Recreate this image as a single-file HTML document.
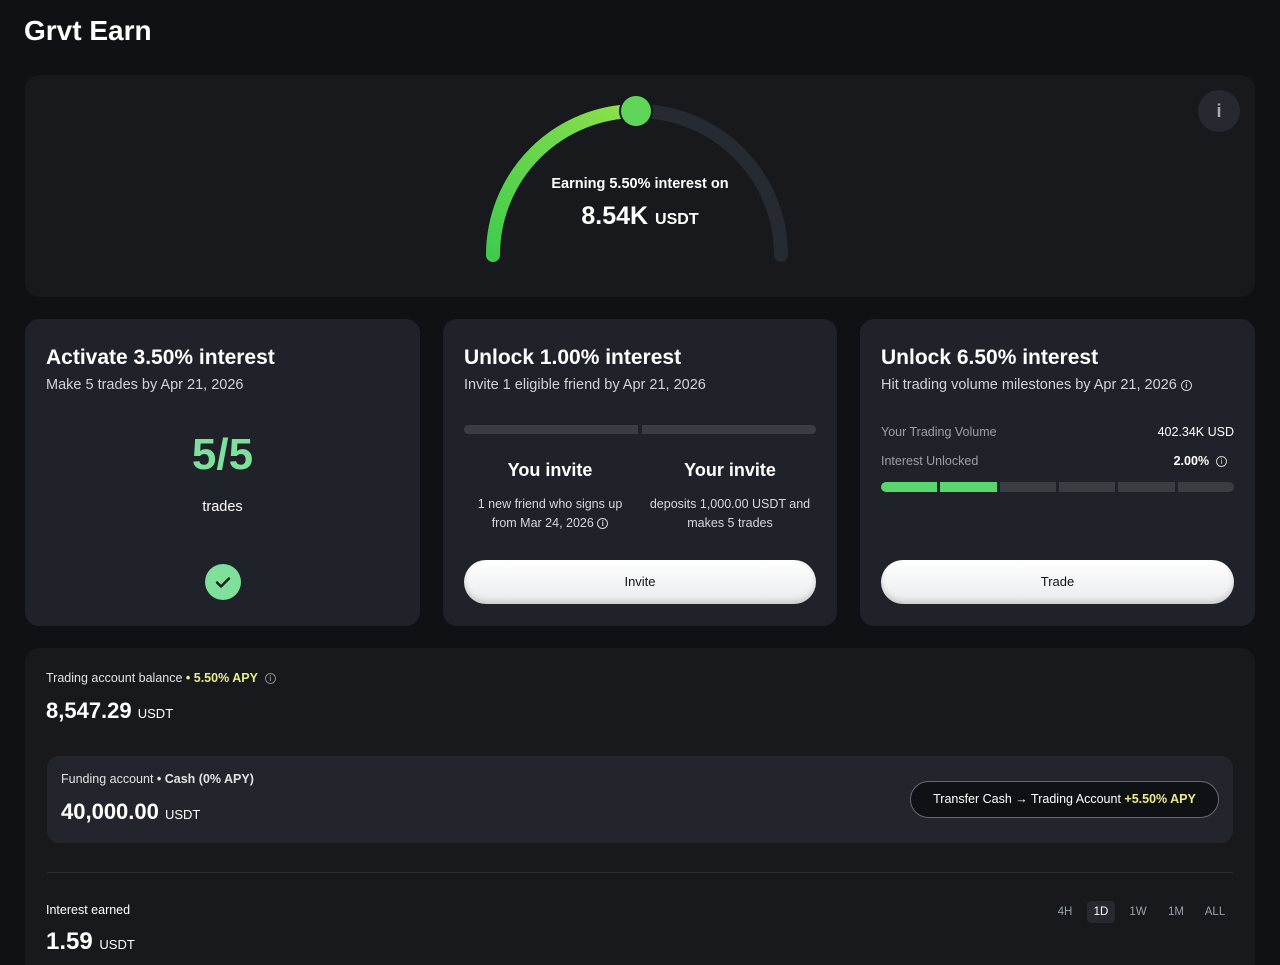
<!DOCTYPE html>
<html><head><meta charset="utf-8"><style>
*{box-sizing:border-box;margin:0;padding:0}
html,body{width:1280px;height:965px;overflow:hidden}
body{background:#0f1114;color:#fff;font-family:"Liberation Sans",sans-serif;position:relative}
.abs{position:absolute}
.card{position:absolute;background:#1f2228;border-radius:14px}
.t{font-weight:bold;font-size:21px;position:absolute;left:21px;top:27px}
.s{font-size:14.5px;color:#d0d3d8;position:absolute;left:21px;top:58px}
.btn{position:absolute;left:21px;right:21px;top:241px;height:44px;border-radius:22px;background:linear-gradient(#fff,#e8eaec);color:#111;font-size:13px;text-align:center;line-height:44px;box-shadow:inset 0 -3px 6px rgba(0,0,0,.15)}
.info{display:inline-block;width:11px;height:11px;border:1.3px solid currentColor;border-radius:50%;font-size:8px;line-height:9px;text-align:center;vertical-align:1px;font-weight:bold}
</style></head><body>
<div class="abs" style="left:24px;top:15px;font-size:28px;font-weight:bold">Grvt Earn</div>

<div class="abs" style="left:25px;top:75px;width:1230px;height:222px;background:#17191c;border-radius:14px"></div>
<div class="abs" style="left:1198px;top:90px;width:42px;height:42px;border-radius:50%;background:#262a30;color:#aab;text-align:center;line-height:42px;font-weight:bold;font-size:18px">i</div>
<svg class="abs" style="left:0;top:0" width="1280" height="300">
<defs><linearGradient id="g" x1="0" y1="1" x2="1" y2="0"><stop offset="0" stop-color="#3fcc4e"/><stop offset="1" stop-color="#8fe04a"/></linearGradient></defs>
<path d="M493 255 A144 144 0 0 1 781 255" fill="none" stroke="#262a31" stroke-width="14" stroke-linecap="round"/>
<path d="M493 255 A144 144 0 0 1 637 111" fill="none" stroke="url(#g)" stroke-width="14" stroke-linecap="round"/>
<circle cx="636" cy="111" r="17" fill="#17191c"/>
<circle cx="636" cy="111" r="15" fill="#5fd65a"/>
</svg>
<div class="abs" style="left:440px;width:400px;top:176px;text-align:center;font-size:14.5px;font-weight:bold">Earning 5.50% interest on</div>
<div class="abs" style="left:440px;width:400px;top:202px;text-align:center;font-size:25px;font-weight:bold">8.54K <span style="font-size:16px">USDT</span></div>

<div class="card" style="left:25px;top:319px;width:395px;height:307px">
<div class="t">Activate 3.50% interest</div>
<div class="s">Make 5 trades by Apr 21, 2026</div>
<div class="abs" style="left:0;right:0;top:111px;text-align:center;font-size:44px;font-weight:bold;color:#7ee09a">5/5</div>
<div class="abs" style="left:0;right:0;top:180px;text-align:center;font-size:14.5px">trades</div>
<div class="abs" style="left:180px;top:245px;width:36px;height:36px;border-radius:50%;background:#7ee09a">
<svg width="36" height="36"><path d="M12 18.5l4 4 8-8" fill="none" stroke="#1a1c1f" stroke-width="2.4" stroke-linecap="round" stroke-linejoin="round"/></svg></div>
</div>

<div class="card" style="left:443px;top:319px;width:394px;height:307px">
<div class="t">Unlock 1.00% interest</div>
<div class="s">Invite 1 eligible friend by Apr 21, 2026</div>
<div class="abs" style="left:21px;top:106px;width:174px;height:9px;background:#3a3e44;border-radius:5px 0 0 5px"></div>
<div class="abs" style="left:199px;top:106px;width:174px;height:9px;background:#3a3e44;border-radius:0 5px 5px 0"></div>
<div class="abs" style="left:17px;width:180px;top:141px;text-align:center;font-size:18px;font-weight:bold">You invite</div>
<div class="abs" style="left:192px;width:190px;top:141px;text-align:center;font-size:18px;font-weight:bold">Your invite</div>
<div class="abs" style="left:17px;width:180px;top:176px;text-align:center;font-size:12.5px;line-height:19px;color:#d5d8dc">1 new friend who signs up<br>from Mar 24, 2026 <span class="info">i</span></div>
<div class="abs" style="left:192px;width:190px;top:176px;text-align:center;font-size:12.5px;line-height:19px;color:#d5d8dc">deposits 1,000.00 USDT and<br>makes 5 trades</div>
<div class="btn">Invite</div>
</div>

<div class="card" style="left:860px;top:319px;width:395px;height:307px">
<div class="t">Unlock 6.50% interest</div>
<div class="s">Hit trading volume milestones by Apr 21, 2026 <span class="info">i</span></div>
<div class="abs" style="left:21px;top:106px;font-size:12.5px;color:#9aa0a8">Your Trading Volume</div>
<div class="abs" style="right:21px;top:106px;font-size:12.5px">402.34K USD</div>
<div class="abs" style="left:21px;top:135px;font-size:12.5px;color:#9aa0a8">Interest Unlocked</div>
<div class="abs" style="right:28px;top:135px;font-size:12.5px;font-weight:bold">2.00% &nbsp;<span class="info" style="color:#ccc;font-weight:normal">i</span></div>
<div class="abs" style="left:21px;top:163px;width:353px;height:10px;display:flex;gap:3px">
<div style="flex:1;background:#5ad66e;border-radius:5px 0 0 5px"></div><div style="flex:1;background:#5ad66e"></div><div style="flex:1;background:#3a3d42"></div><div style="flex:1;background:#3a3d42"></div><div style="flex:1;background:#3a3d42"></div><div style="flex:1;background:#3a3d42;border-radius:0 5px 5px 0"></div></div>
<div class="btn">Trade</div>
</div>

<div class="abs" style="left:25px;top:648px;width:1230px;height:330px;background:#17191c;border-radius:14px"></div>
<div class="abs" style="left:46px;top:671px;font-size:12.5px;color:#e0e2e5">Trading account balance <b style="color:#e8ee8a">• 5.50% APY</b> &nbsp;<span class="info" style="color:#888">i</span></div>
<div class="abs" style="left:46px;top:698px;font-size:22px;font-weight:bold">8,547.29 <span style="font-size:13px;font-weight:normal">USDT</span></div>
<div class="abs" style="left:47px;top:756px;width:1186px;height:87px;background:#22252b;border-radius:12px"></div>
<div class="abs" style="left:61px;top:772px;font-size:12.5px;color:#e0e2e5">Funding account <b>• Cash (0% APY)</b></div>
<div class="abs" style="left:61px;top:799px;font-size:22px;font-weight:bold">40,000.00 <span style="font-size:13px;font-weight:normal">USDT</span></div>
<div class="abs" style="left:910px;top:781px;width:309px;height:37px;border:1px solid #666a70;border-radius:19px;background:#0f1114;text-align:center;line-height:35px;font-size:12.5px">Transfer Cash → Trading Account <b style="color:#e8ee8a">+5.50% APY</b></div>
<div class="abs" style="left:47px;top:872px;width:1186px;height:1px;background:#2a2d32"></div>
<div class="abs" style="left:46px;top:903px;font-size:12.5px">Interest earned</div>
<div class="abs" style="left:46px;top:928px;font-size:24px;font-weight:bold">1.59 <span style="font-size:13px;font-weight:normal">USDT</span></div>
<span class="abs" style="left:1052px;top:901px;width:26px;text-align:center;line-height:22px;font-size:11.5px;color:#9aa0a8">4H</span>
<span class="abs" style="left:1087px;top:901px;width:28px;text-align:center;line-height:22px;font-size:11.5px;background:#262a30;border-radius:4px;color:#fff">1D</span>
<span class="abs" style="left:1125px;top:901px;width:26px;text-align:center;line-height:22px;font-size:11.5px;color:#9aa0a8">1W</span>
<span class="abs" style="left:1163px;top:901px;width:26px;text-align:center;line-height:22px;font-size:11.5px;color:#9aa0a8">1M</span>
<span class="abs" style="left:1200px;top:901px;width:30px;text-align:center;line-height:22px;font-size:11.5px;color:#9aa0a8">ALL</span>
</body></html>
